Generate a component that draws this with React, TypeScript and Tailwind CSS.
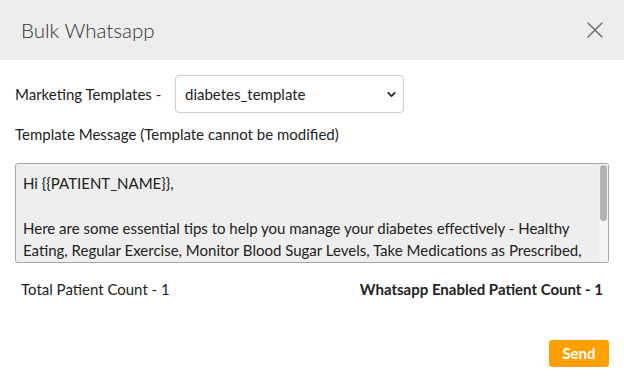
import React, { useState } from 'react';
import { X, ChevronDown } from 'lucide-react';

const TEMPLATE_TEXT = `Hi {{PATIENT_NAME}},

Here are some essential tips to help you manage your diabetes effectively - Healthy Eating, Regular Exercise, Monitor Blood Sugar Levels, Take Medications as Prescribed, Stay Hydrated, Manage Stress and Get Regular Check-ups.

Stay healthy and take care!
Team Clinic`;

export default function App() {
  const [template, setTemplate] = useState('diabetes_template');

  return (
    <div className="w-[624px] h-[385px] bg-white text-[#222] flex flex-col" style={{ fontFamily: 'Lato, "Open Sans", sans-serif' }}>
      {/* Header */}
      <div className="h-[60px] bg-[#ededed] flex items-center justify-between pl-[21px] pr-[15px] shrink-0">
        <h2 className="text-[20.5px] font-light text-[#333]">Bulk Whatsapp</h2>
        <button className="text-[#6f6f6f]">
          <X size={28} strokeWidth={1.3} />
        </button>
      </div>

      {/* Body */}
      <div className="px-[15px] pt-[15px] flex flex-col">
        <div className="flex items-center h-[38px]">
          <label className="text-[15px] w-[160px]">Marketing Templates -</label>
          <div className="relative w-[229px]">
            <select
              value={template}
              onChange={(e) => setTemplate(e.target.value)}
              className="appearance-none w-full h-[38px] border border-[#ccc] rounded-[4px] bg-white pl-[9px] pr-8 text-[15px] text-[#222] outline-none"
            >
              <option value="diabetes_template">diabetes_template</option>
              <option value="hypertension_template">hypertension_template</option>
            </select>
            <ChevronDown size={13} strokeWidth={3.2} className="absolute right-[6px] top-[13px] text-[#222] pointer-events-none" />
          </div>
        </div>

        <p className="text-[15px] mt-[10px]">Template Message (Template cannot be modified)</p>

        {/* Message box, scrollbar drawn over it */}
        <div className="relative mt-[17px] h-[100px]">
          <textarea
            readOnly
            value={TEMPLATE_TEXT}
            className="h-full w-full resize-none bg-[#eeeeee] border border-[#a5a5a5] rounded-[3px] pl-[7px] pr-[16px] pt-[8px] text-[15px] leading-[22.5px] text-[#222] outline-none overflow-hidden"
          />
          <div className="absolute right-[1px] top-[1px] bottom-[1px] w-[9px] bg-[#f3f3f3] rounded-r-[2px] px-[1px] pt-[1px] pointer-events-none">
            <div className="h-[56px] w-full rounded-[4px] bg-[#b3b3b3]" />
          </div>
        </div>

        <div className="flex justify-between items-center mt-[15px] px-[6px] text-[15px]">
          <span>Total Patient Count - 1</span>
          <span className="font-bold">Whatsapp Enabled Patient Count - 1</span>
        </div>

        <div className="flex justify-end mt-[40px]">
          <button className="w-[60px] h-[27px] bg-[#ffa000] text-white font-bold text-[15px] rounded-[3px]">
            Send
          </button>
        </div>
      </div>
    </div>
  );
}
